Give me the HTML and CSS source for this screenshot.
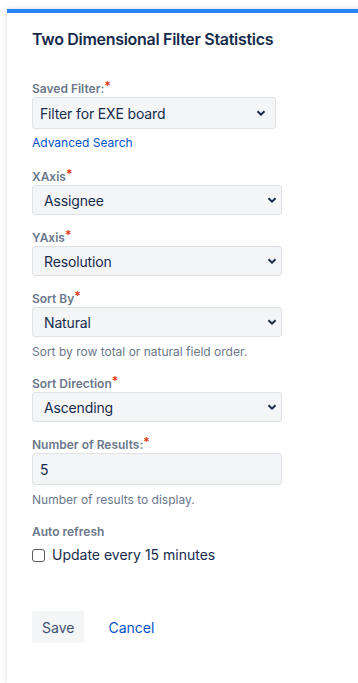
FILE: index.html
```html
<!DOCTYPE html>
<html lang="en">
<head>
    <meta charset="UTF-8">
    <meta name="viewport" content="width=device-width, initial-scale=1.0">
    <title>Two Dimensional Filter Statistics</title>
    <link rel="stylesheet" href="styles.css">
</head>
<body>
    <div class="dialog">
        <h2 class="dialog-title">Two Dimensional Filter Statistics</h2>

        <form class="gadget-form">
            <div class="field with-link">
                <label class="field-label">Saved Filter:<span class="req">*</span></label>
                <div class="select-wrap tall narrow">
                    <select><option>Filter for EXE board</option></select>
                    <svg width="10" height="10" viewBox="0 0 10 10"><path d="M1.5 3.2 L5 6.7 L8.5 3.2" fill="none" stroke="#172b4d" stroke-width="2"/></svg>
                </div>
                <a class="field-link" href="#">Advanced Search</a>
            </div>

            <div class="field">
                <label class="field-label">XAxis<span class="req">*</span></label>
                <div class="select-wrap">
                    <select><option>Assignee</option></select>
                    <svg width="10" height="10" viewBox="0 0 10 10"><path d="M1.5 3.2 L5 6.7 L8.5 3.2" fill="none" stroke="#172b4d" stroke-width="2"/></svg>
                </div>
            </div>

            <div class="field">
                <label class="field-label">YAxis<span class="req">*</span></label>
                <div class="select-wrap">
                    <select><option>Resolution</option></select>
                    <svg width="10" height="10" viewBox="0 0 10 10"><path d="M1.5 3.2 L5 6.7 L8.5 3.2" fill="none" stroke="#172b4d" stroke-width="2"/></svg>
                </div>
            </div>

            <div class="field with-help">
                <label class="field-label">Sort By<span class="req">*</span></label>
                <div class="select-wrap">
                    <select><option>Natural</option></select>
                    <svg width="10" height="10" viewBox="0 0 10 10"><path d="M1.5 3.2 L5 6.7 L8.5 3.2" fill="none" stroke="#172b4d" stroke-width="2"/></svg>
                </div>
                <div class="field-help">Sort by row total or natural field order.</div>
            </div>

            <div class="field">
                <label class="field-label">Sort Direction<span class="req">*</span></label>
                <div class="select-wrap">
                    <select><option>Ascending</option></select>
                    <svg width="10" height="10" viewBox="0 0 10 10"><path d="M1.5 3.2 L5 6.7 L8.5 3.2" fill="none" stroke="#172b4d" stroke-width="2"/></svg>
                </div>
            </div>

            <div class="field with-help">
                <label class="field-label">Number of Results:<span class="req">*</span></label>
                <input class="text-input" type="text" value="5">
                <div class="field-help">Number of results to display.</div>
            </div>

            <div class="field">
                <label class="field-label">Auto refresh</label>
                <label class="check-row">
                    <input type="checkbox" class="checkbox">
                    <span>Update every 15 minutes</span>
                </label>
            </div>

            <div class="buttons">
                <button type="button" class="btn">Save</button>
                <button type="button" class="btn-link">Cancel</button>
            </div>
        </form>
    </div>
</body>
</html>
```

FILE: styles.css
```css
html, body {
    margin: 0;
    height: 100%;
    overflow: hidden;
}
body {
    font-family: Inter, "Noto Sans", sans-serif;
    background: #ffffff;
    color: #172b4d;
    padding: 9px 0 0 7px;
    box-sizing: border-box;
}
.dialog {
    background: white;
    border-top: 4px solid #2684ff;
    box-shadow: 0 0 5px rgba(9,30,66,0.18);
    margin-right: -20px;
    min-height: 100%;
    padding: 16px 25px 0 25px;
    box-sizing: border-box;
}
.dialog-title {
    margin: 0 0 32px 0;
    font-size: 16px;
    line-height: 20px;
    font-weight: 600;
    letter-spacing: -0.3px;
    color: #172b4d;
}
.field {
    margin-bottom: 15px;
}
.field.with-link {
    margin-bottom: 18px;
}
.field.with-help {
    margin-bottom: 16px;
}
.field-label {
    display: block;
    font-size: 12px;
    line-height: 16px;
    font-weight: 600;
    color: #6b778c;
}
.req {
    color: #de350b;
    vertical-align: 3px;
    font-size: 12px;
    line-height: 0;
}
.select-wrap {
    display: flex;
    align-items: center;
    width: 250px;
    height: 30px;
    box-sizing: border-box;
    background: #f4f5f7;
    border: 1px solid #dfe1e6;
    border-radius: 3px;
}
.select-wrap select {
    flex: 1;
    appearance: none;
    -webkit-appearance: none;
    border: none;
    background: transparent;
    font-family: inherit;
    font-size: 14px;
    letter-spacing: -0.15px;
    color: #172b4d;
    padding: 0 0 0 11px;
    height: 100%;
    outline: none;
}
.select-wrap svg {
    margin-right: 4px;
}
.select-wrap.tall {
    height: 32px;
}
.select-wrap.narrow {
    width: 244px;
}
.select-wrap.narrow select {
    padding-left: 7px;
}
.select-wrap.narrow svg {
    margin-right: 9px;
}
.field-link {
    display: block;
    margin-top: 6px;
    font-size: 12px;
    line-height: 16px;
    color: #0052cc;
    text-decoration: none;
}
.field-help {
    margin-top: 7px;
    font-size: 12px;
    line-height: 16px;
    color: #6b778c;
}
.text-input {
    display: block;
    width: 250px;
    height: 32px;
    box-sizing: border-box;
    background: #f4f5f7;
    border: 1px solid #dfe1e6;
    border-radius: 3px;
    font-family: inherit;
    font-size: 14px;
    color: #172b4d;
    padding: 0 7px;
    outline: none;
}
.check-row {
    display: flex;
    align-items: center;
    gap: 7px;
    margin-top: 5px;
    font-size: 14px;
    line-height: 20px;
    color: #172b4d;
}
.checkbox {
    appearance: none;
    -webkit-appearance: none;
    margin: 0;
    width: 13px;
    height: 13px;
    border: 1px solid #5a5a5a;
    border-radius: 3px;
    background: white;
}
.buttons {
    display: flex;
    align-items: center;
    gap: 14px;
    margin-top: 46px;
}
.btn {
    height: 32px;
    padding: 0 10px;
    border: none;
    border-radius: 3px;
    background: #f4f5f7;
    color: #42526e;
    font-family: inherit;
    font-size: 14px;
}
.btn-link {
    height: 32px;
    padding: 0 10px;
    border: none;
    background: none;
    color: #0052cc;
    font-family: inherit;
    font-size: 14px;
}
```
